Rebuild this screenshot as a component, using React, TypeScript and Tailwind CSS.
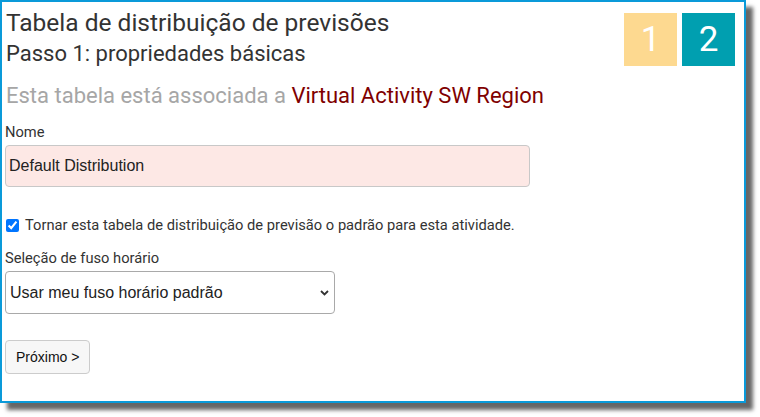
import { useState } from "react";

const ROBOTO = "font-['Roboto',_'Noto_Sans',_sans-serif]";
const ARIAL = "font-['Liberation_Sans',_Arial,_sans-serif]";

function StepBadge({ n, cls }: { n: number; cls: string }) {
  return (
    <div className={`w-[53px] h-[53px] flex items-center justify-center text-white text-[35px] leading-none ${ROBOTO} ${cls}`}>
      {n}
    </div>
  );
}

export default function App() {
  const [isDefault, setIsDefault] = useState(true);
  const [name, setName] = useState("Default Distribution");

  return (
    <div className="relative w-[760px] h-[417px] bg-white overflow-hidden">
      <div className="w-[746px] h-[403px] border-2 border-[#0a9ad9] bg-white shadow-[7px_7px_4px_rgba(0,0,0,0.6)] px-[3px]">
        {/* Header */}
        <div className="flex items-start justify-between">
          <div className={`${ROBOTO} text-[#333333] pl-[1px]`}>
            <h1 className="mt-[7px] text-[24.5px] leading-[28px]">Tabela de distribuição de previsões</h1>
            <h2 className="mt-[4px] text-[22px] leading-[26px]">Passo 1: propriedades básicas</h2>
          </div>
          <div className="flex gap-[5px] mt-[11px] mr-[6px]">
            <StepBadge n={1} cls="bg-[#fdd990]" />
            <StepBadge n={2} cls="bg-[#009fb0]" />
          </div>
        </div>

        <p className={`${ROBOTO} mt-[16px] pl-[1px] text-[22px] leading-[26px] text-[#a6a6a6]`}>
          Esta tabela está associada a <span className="text-[#7f0000]">Virtual Activity SW Region</span>
        </p>

        {/* Nome */}
        <label className={`${ROBOTO} block mt-[13px] text-[14.7px] leading-[20px] text-[#333333]`}>Nome</label>
        <input
          value={name}
          onChange={(e) => setName(e.target.value)}
          className={`${ARIAL} mt-[3px] block w-[525px] h-[42px] px-[3px] rounded-[4px] border border-[#c8c8c8] bg-[#fde8e5] text-[16px] text-[#222222] outline-none`}
        />

        {/* Default checkbox */}
        <label className={`${ROBOTO} mt-[28px] flex items-center gap-[6px] text-[14.7px] leading-[20px] text-[#333333]`}>
          <input
            type="checkbox"
            checked={isDefault}
            onChange={(e) => setIsDefault(e.target.checked)}
            className="ml-[1px] w-[13px] h-[13px] m-0 accent-[#0075ff]"
          />
          Tornar esta tabela de distribuição de previsão o padrão para esta atividade.
        </label>

        {/* Time zone */}
        <label className={`${ROBOTO} block mt-[13px] text-[14.7px] leading-[20px] text-[#333333]`}>Seleção de fuso horário</label>
        <div className="relative mt-[3px] w-[330px]">
          <select
            className={`${ARIAL} appearance-none block w-[330px] h-[43px] pl-[4px] pr-[24px] rounded-[4px] border border-[#a9a9a9] bg-white text-[16px] text-[#222222] outline-none`}
            defaultValue="default"
          >
            <option value="default">Usar meu fuso horário padrão</option>
          </select>
          <svg
            className="absolute right-[6px] top-[19px] pointer-events-none"
            width="9"
            height="6"
            viewBox="0 0 9 6"
          >
            <path d="M1 1 L4.5 4.5 L8 1" fill="none" stroke="#333" strokeWidth="1.8" />
          </svg>
        </div>

        <button
          className={`${ARIAL} mt-[26px] block h-[34px] px-[10px] rounded-[4px] border border-[#cccccc] bg-[#f7f7f7] text-[14px] text-[#111111]`}
        >
          Próximo &gt;
        </button>
      </div>
    </div>
  );
}
